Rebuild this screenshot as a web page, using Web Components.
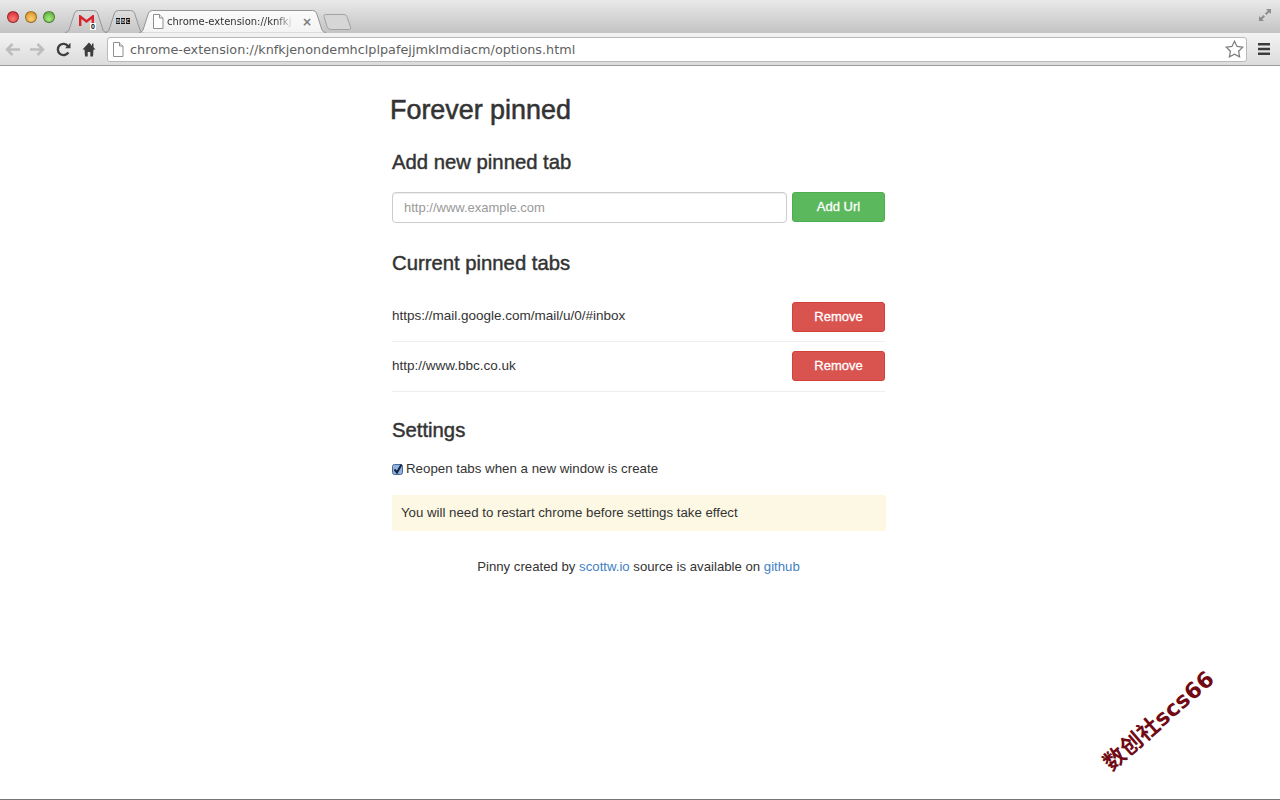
<!DOCTYPE html>
<html lang="en"><head><meta charset="utf-8"><title>Forever pinned</title>
<style>
html,body{margin:0;padding:0;height:100%;background:#fff}
body{width:1280px;height:800px;overflow:hidden;display:flex;flex-direction:column;position:relative;font-family:"Liberation Sans",Arial,sans-serif;color:#333}
</style></head><body>
<browser-chrome url="chrome-extension://knfkjenondemhclplpafejjmkImdiacm/options.html" tab="chrome-extension://knfkj"></browser-chrome>
<options-page>
  <page-title>Forever pinned</page-title>
  <section-heading style="--top:26px;--bottom:19px">Add new pinned tab</section-heading>
  <add-form></add-form>
  <section-heading style="--top:29px;--bottom:18px">Current pinned tabs</section-heading>
  <pinned-row style="--pad:10px;--lift:4px">https://mail.google.com/mail/u/0/#inbox</pinned-row>
  <pinned-row style="--pad:9px;--lift:5px">http://www.bbc.co.uk</pinned-row>
  <section-heading style="--top:27px;--bottom:18px">Settings</section-heading>
  <check-line>Reopen tabs when a new window is create</check-line>
  <notice-box>You will need to restart chrome before settings take effect</notice-box>
  <page-footer>Pinny created by <a href="#">scottw.io</a> source is available on <a href="#">github</a></page-footer>
</options-page>
<water-mark>数创社scs66</water-mark>
<script>
function def(name, html, setup){
  customElements.define(name, class extends HTMLElement{
    constructor(){super();this.attachShadow({mode:'open'}).innerHTML=html;}
    connectedCallback(){ if(setup) setup(this,this.shadowRoot); }
  });
}
const PAGE='<path d="M2.500 .5h6l3.500 3.500v10.500h-9.500z" fill="#fff" stroke="#8f8f8f"/><path d="M8.500 .5v3.500h3.500" fill="#e8e8e8" stroke="#8f8f8f"/>';
def('tab-shape',`<style>:host{display:block;position:relative;flex:none;height:23px}svg{position:absolute;left:0;top:0;width:100%;height:100%;overflow:visible}
.in{position:relative;display:flex;align-items:center;height:100%;box-sizing:border-box}</style><svg id="s"></svg><div class="in"><slot></slot></div>`,
(h,r)=>{const w=+h.getAttribute('w');h.style.width=w+'px';const a=h.hasAttribute('active'),n=h.hasAttribute('newtab');const s=r.getElementById('s');s.setAttribute('viewBox',`0 0 ${w} 23`);
 const d=n?`M2.500 4.500Q.5 4.500 1 6.500L4 16.500Q5 19.500 8 19.500H${w-4}Q${w-.5} 19.500 ${w-1.500} 17L${w-5} 6.500Q${w-6} 4.500 ${w-8} 4.500Z`
  :`M0 22.500Q3 22.500 4 20L9.500 3Q10.500 .5 13.500 .5H${w-13.500}Q${w-10.500} .5 ${w-9.500} 3L${w-4} 20Q${w-3} 22.500 ${w} 22.500`;
 const fill=a?'url(#ga)':(n?'#d6d6d6':'url(#gi)');
 s.innerHTML=`<defs><linearGradient id="ga" x1="0" y1="0" x2="0" y2="1"><stop offset="0" stop-color="#fbfbfb"/><stop offset="1" stop-color="#f3f3f3"/></linearGradient><linearGradient id="gi" x1="0" y1="0" x2="0" y2="1"><stop offset="0" stop-color="#dedede"/><stop offset="1" stop-color="#c6c6c6"/></linearGradient></defs><path d="${d}" fill="${fill}" stroke="${n?'#a2a2a2':'#959595'}"/>`;
});
def('browser-chrome',`<style>
:host{display:block;flex:none;font-family:"DejaVu Sans",sans-serif}
.strip{height:33px;box-sizing:border-box;background:linear-gradient(#e9e9e9,#c3c3c3);display:flex;align-items:flex-end;padding:0 8px 0 7px}
.lights{display:flex;gap:6px;align-self:flex-start;margin-top:11px;margin-right:10px}
.lights i{width:12px;height:12px;border-radius:50%;box-sizing:border-box;border:1px solid rgba(0,0,0,.35)}
.r{background:radial-gradient(circle at 50% 70%,#ff7a74,#d0202a)}.y{background:radial-gradient(circle at 50% 70%,#ffd070,#d08a1c)}.g{background:radial-gradient(circle at 50% 70%,#a8ea80,#4fa62e)}
.tabs{display:flex;flex:1;align-items:flex-end}
.t{font-size:10px;color:#333;white-space:nowrap;margin-left:2px;-webkit-mask-image:linear-gradient(90deg,#000 88%,rgba(0,0,0,.15));mask-image:linear-gradient(90deg,#000 88%,rgba(0,0,0,.15))}
.x{font:bold 12px "DejaVu Sans",sans-serif;color:#7a7a7a;margin-left:auto;margin-right:14px}
.bbc{display:flex;gap:.5px;margin:-2px auto 0;padding-right:3px}
.bbc b{width:4.500px;height:6px;background:#111;color:#ddd;font:bold 5px/6px "Liberation Sans",sans-serif;text-align:center}
.g0{position:relative;margin:-3px 0 0 14px;width:15px;height:11px}
.g0 svg{display:block}
.g0 span{position:absolute;right:-2px;bottom:-4px;background:#fff;color:#000;font:bold 7px/7px "Liberation Sans",sans-serif;padding:0 1px}
.bar{height:33px;box-sizing:border-box;background:linear-gradient(#f3f3f3,#dcdcdc);border-bottom:1px solid #9b9b9b;display:flex;align-items:center;padding:0 10px 0 5px}
.nav{display:flex;align-items:center;margin-right:11px}
.nav svg{display:block}
.omni{flex:1;height:25px;box-sizing:border-box;background:#fff;border:1px solid #b9b9b9;border-radius:3px;display:flex;align-items:center;padding:0 2px 0 3px;font-size:12.800px;color:#5f5f5f;white-space:nowrap}
.omni span{flex:1;margin-left:5px}
.menu{margin-left:11px;display:flex}
</style>
<div class="strip">
 <div class="lights"><i class="r"></i><i class="y"></i><i class="g"></i></div>
 <div class="tabs">
  <tab-shape w="42"><div class="g0"><svg width="15" height="11" viewBox="0 0 15 11"><path d="M1.200 11V1.500L7.500 6.500l6.300-5V11" fill="none" stroke="#d8232a" stroke-width="2.400"/></svg><span>0</span></div></tab-shape>
  <tab-shape w="39" style="margin-left:-2px"><div class="bbc"><b>B</b><b>B</b><b>C</b></div></tab-shape>
  <tab-shape w="187" active style="margin-left:-5px"><svg width="14" height="15" viewBox="0 0 14 15" style="display:block;position:static;width:14px;height:15px;margin-left:12px;flex:none">${PAGE}</svg><span class="t" id="tt"></span><span class="x">×</span></tab-shape>
  <tab-shape w="29" newtab style="margin-left:-3px"></tab-shape>
 </div>
 <svg style="align-self:flex-start;margin-top:8px" width="14" height="14" viewBox="0 0 14 14"><path d="M8 1h5v5L11.200 4.200 8.500 7 7 5.500 9.800 2.800zM6 13H1V8L2.800 9.800 5.500 7 7 8.500 4.200 11.200z" fill="#8d8d8d"/></svg>
</div>
<div class="bar">
 <div class="nav">
  <svg width="15" height="13" viewBox="0 0 15 13"><path d="M7.500 1 2 6.500 7.500 12M2.500 6.500H15" fill="none" stroke="#bdbdbd" stroke-width="2.500"/></svg>
  <svg width="15" height="13" viewBox="0 0 15 13" style="margin-left:10px"><path d="M7.500 1 13 6.500 7.500 12M12.500 6.500H0" fill="none" stroke="#bdbdbd" stroke-width="2.500"/></svg>
  <svg width="15" height="15" viewBox="0 0 15 15" style="margin-left:11px"><path d="M12.300 10.300A5.600 5.600 0 1 1 12 4.200" fill="none" stroke="#3f3f3f" stroke-width="2.400"/><path d="M9 6.200h5.500V.7z" fill="#3f3f3f"/></svg>
  <svg width="14" height="15" viewBox="0 0 14 15" style="margin-left:11px"><path d="M7 .5 .5 7.500h2L3 14.500h2.700v-4.500h2.600v4.500H11l.5-7h2L11.500 5.300V1.500H10v2.200z" fill="#3d3d3d"/></svg>
 </div>
 <div class="omni"><svg width="14" height="15" viewBox="0 0 14 15">${PAGE}</svg><span id="u"></span>
  <svg width="19" height="18" viewBox="0 0 19 18"><path d="M9.500 1.200l2.500 5.200 5.700.8-4.100 4 1 5.600-5.100-2.700-5.100 2.700 1-5.600-4.100-4 5.700-.8z" fill="#fff" stroke="#7c7c7c" stroke-width="1.200"/></svg>
 </div>
 <div class="menu"><svg width="12" height="12" viewBox="0 0 12 12"><path d="M0 0h12v2.500H0zM0 4.700h12v2.500H0zM0 9.400h12v2.500H0z" fill="#3c3c3c"/></svg></div>
</div>`,(h,r)=>{r.getElementById('u').textContent=h.getAttribute('url');r.getElementById('tt').textContent=h.getAttribute('tab');});
def('options-page',`<style>:host{display:block;flex:1;box-sizing:border-box;margin-left:392px;width:493px;font-size:13.300px;line-height:20px;color:#333}</style><slot></slot>`);
def('page-title',`<style>:host{display:block;font-size:26.900px;line-height:30px;margin:29px 0 0 -2px;color:#333;-webkit-text-stroke:.55px #333}</style><slot></slot>`);
def('section-heading',`<style>:host{display:block;font-size:20.300px;line-height:22px;-webkit-text-stroke:.45px #333;margin:var(--top) 0 var(--bottom)}</style><slot></slot>`);
def('app-button',`<style>:host{display:block;flex:none;width:93px;height:30px;box-sizing:border-box;border-radius:3px;border:1px solid var(--edge);background:var(--bg);color:#fff;font-size:13px;line-height:28px;text-align:center;-webkit-text-stroke:.3px #fff}</style><slot></slot>`);
def('add-form',`<style>:host{display:flex;gap:5px;align-items:flex-start}
.i{flex:1;height:31px;box-sizing:border-box;border:1px solid #ccc;border-radius:4px;padding:0 11px;font:13px/30px "Liberation Sans",sans-serif;color:#999;box-shadow:inset 0 1px 1px rgba(0,0,0,.075)}</style>
<div class="i">http://www.example.com</div><app-button style="--bg:#5cb85c;--edge:#4cae4c">Add Url</app-button>`);
def('pinned-row',`<style>:host{display:flex;justify-content:space-between;align-items:flex-start;height:50px;box-sizing:border-box;padding-top:var(--pad);border-bottom:1px solid #eee}
.l{padding-top:var(--lift);font-size:13.500px}</style><div class="l"><slot></slot></div><app-button style="--bg:#d9534f;--edge:#d43f3a">Remove</app-button>`);
def('check-line',`<style>:host{display:flex;align-items:center;height:20px;gap:3px}svg{display:block}</style>
<svg width="11" height="13" viewBox="0 0 11 13"><rect x=".5" y="1.500" width="10" height="10" rx="2" fill="#8fb4de" stroke="#47689a"/><path d="M2.500 6.500 5 9.500 9.500 1.500" fill="none" stroke="#16243f" stroke-width="2"/></svg><slot></slot>`);
def('notice-box',`<style>:host{display:block;margin:16px -1px 0 0;height:36px;box-sizing:border-box;padding:8px 9px;background:#fcf8e3;border-radius:2px;font-size:13.250px}</style><slot></slot>`);
def('page-footer',`<style>:host{display:block;margin:26px 0 0;text-align:center;font-size:13.200px}::slotted(a){color:#3f80c4;text-decoration:none}</style><slot></slot>`);
def('water-mark',`<style>:host{position:absolute;left:1084px;top:706px;width:150px;font:bold 22px/30px "DejaVu Sans","Noto Sans CJK SC",sans-serif;letter-spacing:.3px;color:#700a14;white-space:nowrap;text-align:center;transform:rotate(-41deg);transform-origin:50% 50%}</style><slot></slot>`);
def('bottom-line',`<style>:host{display:block;flex:none;height:2px;background:linear-gradient(#fff 50%,#777 50%)}</style>`);
</script>
<bottom-line></bottom-line>
</body></html>
